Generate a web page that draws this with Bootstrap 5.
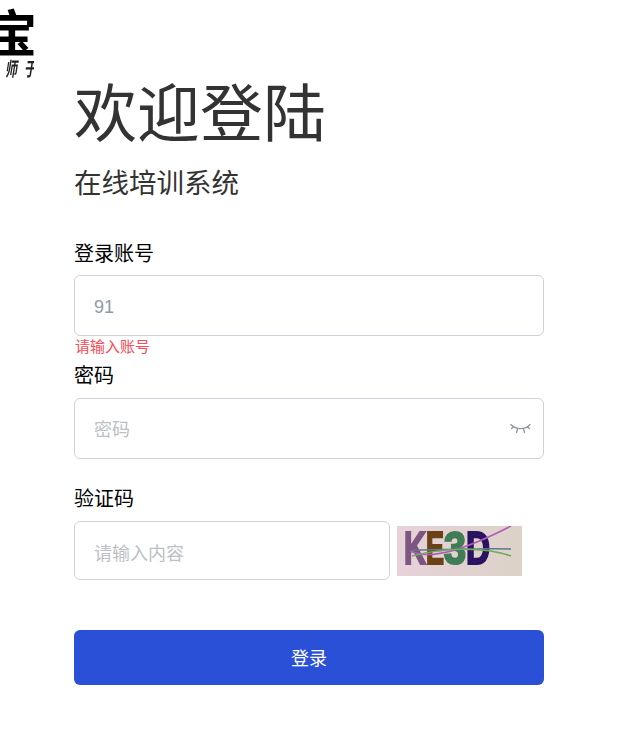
<!DOCTYPE html>
<html lang="zh-CN">
<head>
<meta charset="utf-8">
<title>欢迎登陆</title>
<link href="https://cdn.jsdelivr.net/npm/bootstrap@5.3.0/dist/css/bootstrap.min.css" rel="stylesheet">
<style>
body{font-family:"Liberation Sans","Noto Sans CJK SC",sans-serif;background:#fff;color:#000;height:745px;overflow:hidden}
.logo-box{width:34px;height:84px;overflow:hidden;position:relative}
.logo-main{position:absolute;left:-13px;top:6px;font-size:50px;line-height:58px;font-weight:700;color:#000;white-space:nowrap}
.logo-sign{position:absolute;left:5px;top:58px;font-size:12px;line-height:24px;font-style:italic;color:#222;white-space:nowrap;font-weight:700;transform:scaleY(1.6);transform-origin:left center;display:flex;gap:7px}
.login-area{width:470px;margin-left:74px}
.welcome{font-size:63px;line-height:60px;font-weight:400;color:#333;margin:0}
.subtitle{font-size:27.5px;line-height:40px;color:#333;margin:20px 0 0;font-weight:400}
.lbl{display:block;font-size:20px;line-height:28px;color:#000;margin:0 0 8px}
.first-lbl{margin-top:36px;margin-bottom:7px}
.inp{display:block;width:100%;height:61px;border:1px solid #cdd1da;border-radius:6px;padding:4px 19px 0;font-size:18px;color:#8f99a8;font-family:inherit;outline:0;background:#fff}
.inp::placeholder{color:#bbbfc6;opacity:1}
.err-msg{font-size:15px;line-height:20px;color:#fb4a55;padding-left:1px;margin-top:1px;height:25px}
.eye-ic{position:absolute;right:13px;top:25px}
.gap-block{margin-top:26px}
.captcha-inp{width:316px;height:59px;flex:none;padding-top:7px}
.captcha{margin:5px 0 0 7px;flex:none;display:block}
.btn-login{display:block;width:100%;height:55px;margin-top:50px;background:#2a50d8;border:0;border-radius:6px;color:#fff;font-size:18px;padding:4px 0 0}
.btn-login:hover{background:#2a50d8;color:#fff}
</style>
</head>
<body>
<div class="logo-box"><span class="logo-main">宝</span><span class="logo-sign"><span>师</span><span>于</span></span></div>
<div class="login-area">
  <h1 class="welcome">欢迎登陆</h1>
  <h2 class="subtitle">在线培训系统</h2>
  <form>
    <label class="lbl first-lbl" for="acc">登录账号</label>
    <input id="acc" class="inp" type="text" value="91">
    <div class="err-msg">请输入账号</div>
    <label class="lbl" for="pwd">密码</label>
    <div class="position-relative">
      <input id="pwd" class="inp" type="password" placeholder="密码">
      <svg class="eye-ic" width="21" height="12" viewBox="0 0 21 12" fill="none" stroke="#8b97a5" stroke-width="1.3" stroke-linecap="round"><path d="M1 1.5C6 7 15 7 20 1.5"/><path d="M3.5 4 1.5 5.5M7.5 6l-1 3.5M13.5 6l1 3.5M17.5 4l2 1.5"/></svg>
    </div>
    <div class="gap-block">
      <label class="lbl" for="cap">验证码</label>
      <div class="d-flex align-items-start">
        <input id="cap" class="inp captcha-inp" type="text" placeholder="请输入内容">
        <svg class="captcha" width="125" height="50" viewBox="0 0 125 50">
          <defs>
            <linearGradient id="capbg" x1="0" y1="0" x2="1" y2="0"><stop offset="0" stop-color="#e6d2d9"/><stop offset="1" stop-color="#dcd2c8"/></linearGradient>
            <filter id="soft"><feGaussianBlur stdDeviation=".5"/></filter>
          </defs>
          <rect width="125" height="50" fill="url(#capbg)"/>
          <g font-family="'Liberation Sans',sans-serif" font-weight="700" font-size="46" stroke-width="2.2" filter="url(#soft)">
            <text x="7" y="38" fill="#7d5580" stroke="#7d5580" textLength="22" lengthAdjust="spacingAndGlyphs">K</text>
            <text x="29" y="38" fill="#6b4318" stroke="#6b4318" textLength="18" lengthAdjust="spacingAndGlyphs">E</text>
            <text x="47" y="38" fill="#3f7c55" stroke="#3f7c55" textLength="22" lengthAdjust="spacingAndGlyphs">3</text>
            <text x="69" y="38" fill="#2a1260" stroke="#2a1260" textLength="24" lengthAdjust="spacingAndGlyphs">D</text>
          </g>
          <path d="M13 25C35 36 75 20 114 0" fill="none" stroke="#b35cbb" stroke-width="1.6"/>
          <path d="M15 24C55 24 85 22 114 23" fill="none" stroke="#5a7a8c" stroke-width="1.6"/>
          <path d="M15 30C45 22 85 20 114 30" fill="none" stroke="#6cab5c" stroke-width="1.6"/>
        </svg>
      </div>
    </div>
    <button type="button" class="btn btn-login">登录</button>
  </form>
</div>
</body>
</html>
